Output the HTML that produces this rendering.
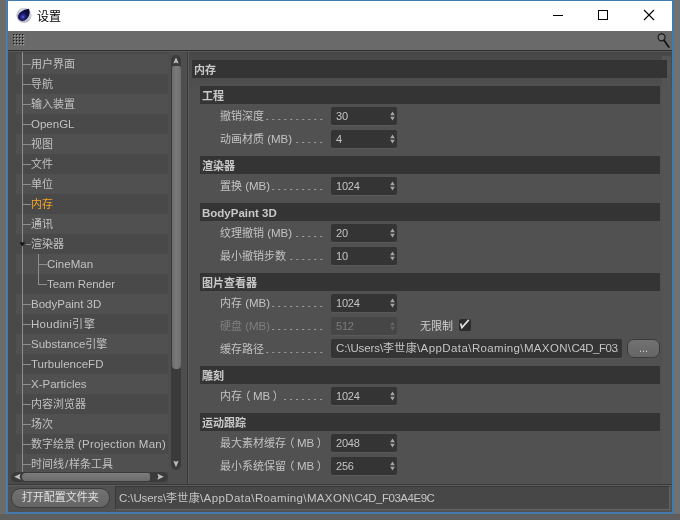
<!DOCTYPE html><html lang="zh"><head><meta charset="utf-8"><title>设置</title><style>
*{box-sizing:border-box;margin:0;padding:0}
html,body{width:680px;height:520px;overflow:hidden;background:#6c6c6c}
body{position:relative;font-family:"Liberation Sans","Noto Sans CJK SC",sans-serif;font-size:11px;color:#c4c4c4;line-height:1}
.abs{position:absolute}
.ti,.lab,.hdr,.inp,.btn,#p2,#ttext,.cb{will-change:transform}
.l{font-size:11.5px}
.n{font-size:11px;letter-spacing:-0.2px}
.pl{position:relative;left:-2.5px}
.pr{position:relative;left:2.5px}
#bgR{left:674px;top:0;width:6px;height:520px;background:#717171}
#bgB{left:0;top:514px;width:680px;height:6px;background:#5e5e5e}
#win{left:7px;top:0;width:667px;height:514px;background:#515151;border:1px solid #437aae;border-right-width:2px;border-bottom-width:2px}
#winL{left:6px;top:0;width:1px;height:514px;background:#5a7fa6}
#title{left:8px;top:1px;width:664px;height:30px;background:#fff}
#ttext{left:37px;top:10px;font-size:12px;color:#000;line-height:14px;white-space:nowrap}
#tool{left:8px;top:31px;width:664px;height:19px;background:#6a6a6a}
#tline{left:8px;top:50px;width:664px;height:1px;background:#303030}
#tshadow{left:8px;top:51px;width:664px;height:40px;background:linear-gradient(#464646,#4a4a4a 25%,#4d4d4d 70%,#515151)}
.row{left:16px;width:153px;height:20px}
.row.d{background:#505050}
.ti{white-space:nowrap;line-height:20px;height:20px;color:#c2c2c2}
.ti.sel{color:#f6a623}
.tl{background:#8e8e8e}
.hdr{background:#343434;height:18px;line-height:20px;font-weight:bold;color:#c8c8c8;padding-left:2px;white-space:nowrap}
.lab{height:18px;line-height:18px;white-space:nowrap;color:#c2c2c2;display:flex;width:106.3px}
.lab .dots{flex:1;margin-left:2px;height:18px;background-image:linear-gradient(90deg,#a0a0a0 1.6px,transparent 1.6px);background-size:6px 1.2px;background-position:right 0 top 11.7px;background-repeat:repeat-x}
.lab.dis{color:#7e7e7e}
.inp{background:#343434;height:18px;line-height:18px;padding-left:5px;color:#c4c4c4;border-radius:2px;white-space:nowrap;overflow:hidden;box-shadow:0 1px 0 #595959}
.inp.dis{background:#464646;color:#7c7c7c}
.btn{background:linear-gradient(#727272,#656565);border:1px solid #3c3c3c;color:#e0e0e0;text-align:center;white-space:nowrap}
</style></head><body>
<div class="abs" id="bgR"></div><div class="abs" id="bgB"></div>
<div class="abs" id="win"></div><div class="abs" id="winL"></div>
<div class="abs" id="title"></div>
<svg class="abs" style="left:16px;top:7px" width="16" height="16" viewBox="0 0 16 16">
<defs><radialGradient id="g1" cx="0.55" cy="0.4" r="0.65"><stop offset="0" stop-color="#f4f4f8"/><stop offset="0.6" stop-color="#cfd0d8"/><stop offset="1" stop-color="#9a9ca8"/></radialGradient>
<radialGradient id="g2" cx="0.42" cy="0.66" r="0.5"><stop offset="0" stop-color="#6e6cd0"/><stop offset="0.25" stop-color="#30309a"/><stop offset="0.65" stop-color="#141456"/><stop offset="1" stop-color="#0c0c40"/></radialGradient></defs>
<circle cx="8" cy="8.3" r="7.5" fill="url(#g1)"/>
<path d="M12.8 1.8C14.6 5 13.6 10.2 9.6 12.9C6 15.2 2 13.4 2 9.8C2 6.2 6.6 2.6 12.8 1.8Z" fill="url(#g2)"/>
</svg>
<div class="abs" id="ttext">设置</div>
<svg class="abs" style="left:540px;top:1px" width="132" height="30" viewBox="0 0 132 30" fill="none" stroke="#000" stroke-width="1">
<path d="M13 14.5H23"/><rect x="58.5" y="9.5" width="9" height="9"/><path d="M104 9L114 19M114 9L104 19" stroke-width="1.1"/></svg>
<div class="abs" id="tool"></div><div class="abs" id="tline"></div><div class="abs" id="tshadow"></div>
<svg class="abs" style="left:13px;top:34px" width="13" height="13" viewBox="0 0 13 13"><defs><pattern id="gp" width="3" height="3" patternUnits="userSpaceOnUse"><rect x="0" y="0" width="1.4" height="1.4" fill="#1c1c1c"/><rect x="1.2" y="1.2" width="1" height="1" fill="#d0d0d0"/></pattern></defs><rect width="12" height="12" fill="url(#gp)"/></svg>
<svg class="abs" style="left:655px;top:32px" width="16" height="17" viewBox="0 0 16 17" fill="none"><circle cx="6.6" cy="5.3" r="3.5" stroke="#181818" stroke-width="1.25" fill="#787878"/><path d="M9 8.3L13.8 15" stroke="#141414" stroke-width="1.8" stroke-linecap="round"/></svg>
<div class="abs" style="left:8px;top:51px;width:179px;height:433px;background:#494949"></div>
<div class="abs row d" style="top:54px;height:20px"></div>
<div class="abs row d" style="top:94px;height:20px"></div>
<div class="abs row d" style="top:134px;height:20px"></div>
<div class="abs row d" style="top:174px;height:20px"></div>
<div class="abs row d" style="top:214px;height:20px"></div>
<div class="abs row d" style="top:254px;height:20px"></div>
<div class="abs row d" style="top:294px;height:20px"></div>
<div class="abs row d" style="top:334px;height:20px"></div>
<div class="abs row d" style="top:374px;height:20px"></div>
<div class="abs row d" style="top:414px;height:20px"></div>
<div class="abs row d" style="top:454px;height:18px"></div>
<div class="abs tl" style="left:22px;top:52px;width:1px;height:420px"></div>
<div class="abs tl" style="left:23px;top:64px;width:8px;height:1px"></div>
<div class="abs tl" style="left:23px;top:84px;width:8px;height:1px"></div>
<div class="abs tl" style="left:23px;top:104px;width:8px;height:1px"></div>
<div class="abs tl" style="left:23px;top:124px;width:8px;height:1px"></div>
<div class="abs tl" style="left:23px;top:144px;width:8px;height:1px"></div>
<div class="abs tl" style="left:23px;top:164px;width:8px;height:1px"></div>
<div class="abs tl" style="left:23px;top:184px;width:8px;height:1px"></div>
<div class="abs tl" style="left:23px;top:204px;width:8px;height:1px"></div>
<div class="abs tl" style="left:23px;top:224px;width:8px;height:1px"></div>
<div class="abs tl" style="left:26px;top:244px;width:5px;height:1px"></div>
<div class="abs tl" style="left:39px;top:264px;width:8px;height:1px"></div>
<div class="abs tl" style="left:39px;top:284px;width:8px;height:1px"></div>
<div class="abs tl" style="left:23px;top:304px;width:8px;height:1px"></div>
<div class="abs tl" style="left:23px;top:324px;width:8px;height:1px"></div>
<div class="abs tl" style="left:23px;top:344px;width:8px;height:1px"></div>
<div class="abs tl" style="left:23px;top:364px;width:8px;height:1px"></div>
<div class="abs tl" style="left:23px;top:384px;width:8px;height:1px"></div>
<div class="abs tl" style="left:23px;top:404px;width:8px;height:1px"></div>
<div class="abs tl" style="left:23px;top:424px;width:8px;height:1px"></div>
<div class="abs tl" style="left:23px;top:444px;width:8px;height:1px"></div>
<div class="abs tl" style="left:23px;top:464px;width:8px;height:1px"></div>
<div class="abs tl" style="left:38px;top:254px;width:1px;height:31px"></div>
<svg class="abs" style="left:19px;top:242px" width="7" height="5" viewBox="0 0 7 5"><path d="M0.3 0.3H6.3L3.3 4.5Z" fill="#181818"/></svg>
<div class="abs ti" id="t0" style="left:31px;top:54px">用户界面</div>
<div class="abs ti" id="t1" style="left:31px;top:74px">导航</div>
<div class="abs ti" id="t2" style="left:31px;top:94px">输入装置</div>
<div class="abs ti" id="t3" style="left:31px;top:114px"><span class="l">OpenGL</span></div>
<div class="abs ti" id="t4" style="left:31px;top:134px">视图</div>
<div class="abs ti" id="t5" style="left:31px;top:154px">文件</div>
<div class="abs ti" id="t6" style="left:31px;top:174px">单位</div>
<div class="abs ti sel" id="t7" style="left:31px;top:194px">内存</div>
<div class="abs ti" id="t8" style="left:31px;top:214px">通讯</div>
<div class="abs ti" id="t9" style="left:31px;top:234px">渲染器</div>
<div class="abs ti" id="t10" style="left:47px;top:254px"><span class="l">CineMan</span></div>
<div class="abs ti" id="t11" style="left:47px;top:274px"><span class="l" style="letter-spacing:-0.1px">Team Render</span></div>
<div class="abs ti" id="t12" style="left:31px;top:294px"><span class="l">BodyPaint 3D</span></div>
<div class="abs ti" id="t13" style="left:31px;top:314px"><span class="l" style="letter-spacing:0.3px">Houdini</span><span style="letter-spacing:0.8px">引擎</span></div>
<div class="abs ti" id="t14" style="left:31px;top:334px"><span class="l">Substance</span>引擎</div>
<div class="abs ti" id="t15" style="left:31px;top:354px"><span class="l">TurbulenceFD</span></div>
<div class="abs ti" id="t16" style="left:31px;top:374px"><span class="l">X-Particles</span></div>
<div class="abs ti" id="t17" style="left:31px;top:394px">内容浏览器</div>
<div class="abs ti" id="t18" style="left:31px;top:414px">场次</div>
<div class="abs ti" id="t19" style="left:31px;top:434px">数字绘景 <span class="l" style="letter-spacing:0.22px">(Projection Man)</span></div>
<div class="abs ti" id="t20" style="left:31px;top:454px;height:18px;overflow:hidden">时间线<span class="l" style="padding:0 0.9px">/</span>样条工具</div>
<div class="abs" style="left:168px;top:52px;width:19px;height:432px;background:#4e4e4e"></div>
<div class="abs" style="left:171px;top:55px;width:10px;height:415px;background:#3b3b3b;border-radius:5px"></div>
<div class="abs" style="left:172px;top:65.5px;width:8.5px;height:303px;background:linear-gradient(90deg,#6a6a6a,#7b7b7b 45%,#6e6e6e);border-radius:2px 2px 4px 4px"></div>
<svg class="abs" style="left:171px;top:55px" width="10" height="11" viewBox="0 0 10 11"><path d="M5 2.2L7.6 8.6L5 7.6L2.4 8.6Z" fill="#c0c0c0"/></svg>
<svg class="abs" style="left:171px;top:458px" width="10" height="11" viewBox="0 0 10 11"><path d="M5 9.2L7.6 2.8L5 3.8L2.4 2.8Z" fill="#c0c0c0"/></svg>
<div class="abs" style="left:11px;top:472px;width:157px;height:9.5px;background:#3b3b3b;border-radius:5px"></div>
<div class="abs" style="left:22px;top:473px;width:128px;height:8px;background:linear-gradient(#7c7c7c,#6b6b6b);border-radius:4px 2px 2px 4px"></div>
<svg class="abs" style="left:13px;top:472px" width="9" height="10" viewBox="0 0 9 10"><path d="M1.2 4.8L7.6 1.8L6.6 4.8L7.6 7.8Z" fill="#c0c0c0"/></svg>
<svg class="abs" style="left:156px;top:472px" width="9" height="10" viewBox="0 0 9 10"><path d="M7.8 4.8L1.4 1.8L2.4 4.8L1.4 7.8Z" fill="#c0c0c0"/></svg>
<div class="abs" style="left:187px;top:51px;width:1px;height:433px;background:#3a3a3a"></div>
<div class="abs" style="left:188px;top:51px;width:1px;height:433px;background:#5a5a5a"></div>
<div class="abs" style="left:8px;top:484px;width:664px;height:1px;background:#3a3a3a"></div>
<div class="abs" style="left:8px;top:485px;width:664px;height:1px;background:#5c5c5c"></div>
<div class="abs" style="left:8px;top:51px;width:664px;height:1px;background:#575757"></div>
<div class="abs" style="left:662px;top:56px;width:9px;height:428px;background:#545454"></div>
<div class="abs hdr" style="left:192px;top:60px;width:475px">内存</div>
<div class="abs hdr" style="left:200px;top:86px;width:460px">工程</div>
<div class="abs lab" style="left:220px;top:107px"><span>撤销深度</span><span class="dots"></span></div>
<div class="abs inp" style="left:331px;top:107px;width:66px"><span class="n">30</span></div>
<svg class="abs" style="left:389.5px;top:111px" width="5" height="10" viewBox="0 0 5 10"><path d="M2.5 0.5L4.8 4.2H0.2Z M2.5 9.5L4.8 5.8H0.2Z" fill="#a6a6a6"/></svg>
<div class="abs lab" style="left:220px;top:130px"><span>动画材质<span class="l"> (MB)</span></span><span class="dots"></span></div>
<div class="abs inp" style="left:331px;top:130px;width:66px"><span class="n">4</span></div>
<svg class="abs" style="left:389.5px;top:134px" width="5" height="10" viewBox="0 0 5 10"><path d="M2.5 0.5L4.8 4.2H0.2Z M2.5 9.5L4.8 5.8H0.2Z" fill="#a6a6a6"/></svg>
<div class="abs hdr" style="left:200px;top:156px;width:460px">渲染器</div>
<div class="abs lab" style="left:220px;top:177px"><span>置换<span class="l"> (MB)</span></span><span class="dots"></span></div>
<div class="abs inp" style="left:331px;top:177px;width:66px"><span class="n">1024</span></div>
<svg class="abs" style="left:389.5px;top:181px" width="5" height="10" viewBox="0 0 5 10"><path d="M2.5 0.5L4.8 4.2H0.2Z M2.5 9.5L4.8 5.8H0.2Z" fill="#a6a6a6"/></svg>
<div class="abs hdr" style="left:200px;top:203px;width:460px"><span class="l">BodyPaint 3D</span></div>
<div class="abs lab" style="left:220px;top:224px"><span>纹理撤销<span class="l"> (MB)</span></span><span class="dots"></span></div>
<div class="abs inp" style="left:331px;top:224px;width:66px"><span class="n">20</span></div>
<svg class="abs" style="left:389.5px;top:228px" width="5" height="10" viewBox="0 0 5 10"><path d="M2.5 0.5L4.8 4.2H0.2Z M2.5 9.5L4.8 5.8H0.2Z" fill="#a6a6a6"/></svg>
<div class="abs lab" style="left:220px;top:247px"><span>最小撤销步数</span><span class="dots"></span></div>
<div class="abs inp" style="left:331px;top:247px;width:66px"><span class="n">10</span></div>
<svg class="abs" style="left:389.5px;top:251px" width="5" height="10" viewBox="0 0 5 10"><path d="M2.5 0.5L4.8 4.2H0.2Z M2.5 9.5L4.8 5.8H0.2Z" fill="#a6a6a6"/></svg>
<div class="abs hdr" style="left:200px;top:273px;width:460px">图片查看器</div>
<div class="abs lab" style="left:220px;top:294px"><span>内存<span class="l"> (MB)</span></span><span class="dots"></span></div>
<div class="abs inp" style="left:331px;top:294px;width:66px"><span class="n">1024</span></div>
<svg class="abs" style="left:389.5px;top:298px" width="5" height="10" viewBox="0 0 5 10"><path d="M2.5 0.5L4.8 4.2H0.2Z M2.5 9.5L4.8 5.8H0.2Z" fill="#a6a6a6"/></svg>
<div class="abs lab dis" style="left:220px;top:317px"><span>硬盘<span class="l"> (MB)</span></span><span class="dots"></span></div>
<div class="abs inp dis" style="left:331px;top:317px;width:66px"><span class="n">512</span></div>
<svg class="abs" style="left:389.5px;top:321px" width="5" height="10" viewBox="0 0 5 10"><path d="M2.5 0.5L4.8 4.2H0.2Z M2.5 9.5L4.8 5.8H0.2Z" fill="#646464"/></svg>
<div class="abs cb" style="left:420px;top:317px;height:18px;line-height:18px;color:#d0d0d0;white-space:nowrap">无限制</div>
<div class="abs" style="left:458.5px;top:319px;width:12px;height:11.5px;background:#2c2c2c;border-radius:2px"></div>
<svg class="abs" style="left:459px;top:317px" width="14" height="14" viewBox="0 0 14 14"><path d="M1.6 6.4L2.9 10.6L9.8 2.9" fill="none" stroke="#e4e4e4" stroke-width="1.6" stroke-linejoin="miter"/></svg>
<div class="abs lab" style="left:220px;top:340px"><span>缓存路径</span><span class="dots"></span></div>
<div class="abs inp" id="p1" style="left:331px;top:339px;width:291px;height:19px;line-height:19px"><div style="width:281.5px;overflow:hidden;white-space:nowrap"><span class="l" style="letter-spacing:-0.1px">C:\Users\</span><span style="letter-spacing:0.3px">李世康</span><span class="l" style="letter-spacing:0.42px">\AppData\</span><span class="l" style="letter-spacing:0.35px">Roaming\</span><span class="l" style="letter-spacing:0.35px">MAXON\</span><span class="l" style="letter-spacing:-0.47px">C4D_F03A4E9C</span></div></div>
<div class="abs btn" style="left:627px;top:338.5px;width:33px;height:19px;border-radius:7px;line-height:16px;color:#cfcfcf">...</div>
<div class="abs hdr" style="left:200px;top:366px;width:460px">雕刻</div>
<div class="abs lab" style="left:220px;top:387px"><span>内存<span class="pl">（</span><span class="l">MB</span><span class="pr">）</span></span><span class="dots"></span></div>
<div class="abs inp" style="left:331px;top:387px;width:66px"><span class="n">1024</span></div>
<svg class="abs" style="left:389.5px;top:391px" width="5" height="10" viewBox="0 0 5 10"><path d="M2.5 0.5L4.8 4.2H0.2Z M2.5 9.5L4.8 5.8H0.2Z" fill="#a6a6a6"/></svg>
<div class="abs hdr" style="left:200px;top:413px;width:460px">运动跟踪</div>
<div class="abs lab" style="left:220px;top:434px"><span>最大素材缓存<span class="pl">（</span><span class="l">MB</span><span class="pr">）</span></span><span class="dots"></span></div>
<div class="abs inp" style="left:331px;top:434px;width:66px"><span class="n">2048</span></div>
<svg class="abs" style="left:389.5px;top:438px" width="5" height="10" viewBox="0 0 5 10"><path d="M2.5 0.5L4.8 4.2H0.2Z M2.5 9.5L4.8 5.8H0.2Z" fill="#a6a6a6"/></svg>
<div class="abs lab" style="left:220px;top:457px"><span>最小系统保留<span class="pl">（</span><span class="l">MB</span><span class="pr">）</span></span><span class="dots"></span></div>
<div class="abs inp" style="left:331px;top:457px;width:66px"><span class="n">256</span></div>
<svg class="abs" style="left:389.5px;top:461px" width="5" height="10" viewBox="0 0 5 10"><path d="M2.5 0.5L4.8 4.2H0.2Z M2.5 9.5L4.8 5.8H0.2Z" fill="#a6a6a6"/></svg>
<div class="abs btn" style="left:10.5px;top:488px;width:98.5px;height:19.5px;border-radius:9.5px;line-height:17px">打开配置文件夹</div>
<div class="abs" id="p2" style="left:115px;top:486px;width:555px;height:23.5px;background:#474747;border:1px solid #383838;border-bottom-color:#646464;border-right-color:#646464;line-height:22px;padding-left:3px;color:#c6c6c6;white-space:nowrap"><span class="l" style="letter-spacing:-0.1px">C:\Users\</span><span style="letter-spacing:0.3px">李世康</span><span class="l" style="letter-spacing:0.42px">\AppData\</span><span class="l" style="letter-spacing:0.35px">Roaming\</span><span class="l" style="letter-spacing:0.35px">MAXON\</span><span class="l" style="letter-spacing:-0.47px">C4D_F03A4E9C</span></div>
</body></html>
